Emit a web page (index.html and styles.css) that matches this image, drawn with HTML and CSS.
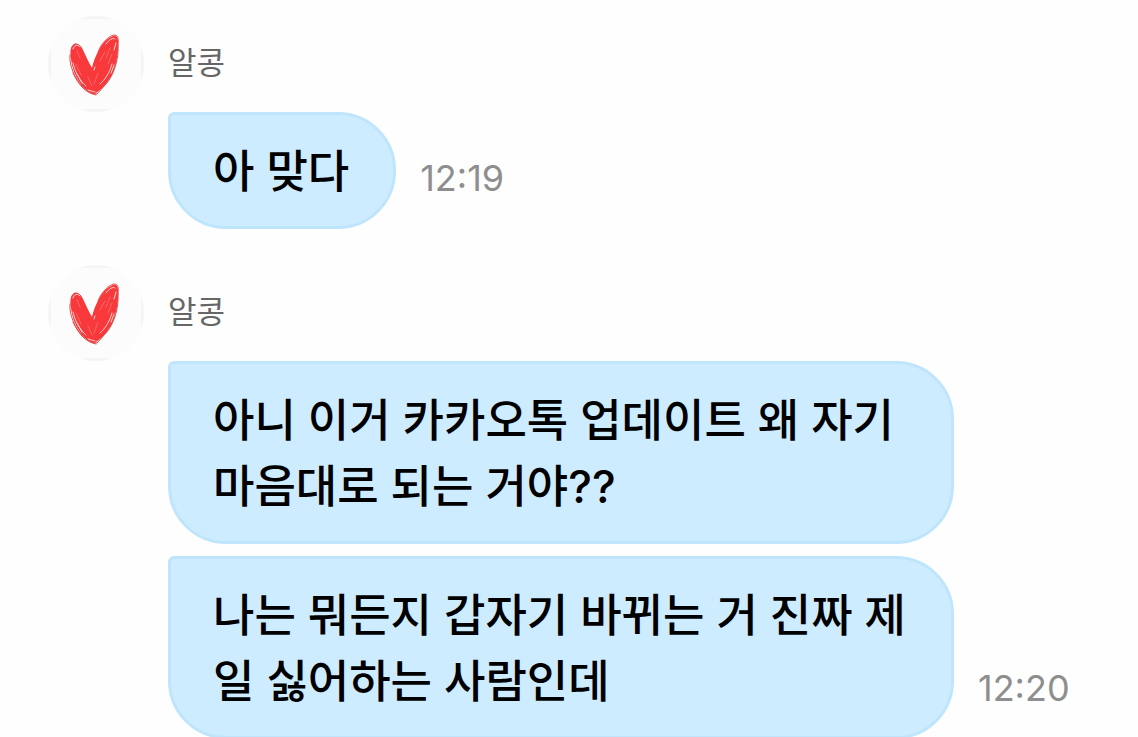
FILE: index.html
```html
<!DOCTYPE html>
<html lang="ko">
<head>
    <meta charset="UTF-8">
    <meta name="viewport" content="width=device-width, initial-scale=1.0">
    <title>알콩</title>
    <link rel="stylesheet" href="styles.css">
</head>
<body>

<svg class="symbols" aria-hidden="true">
    <symbol id="heart" viewBox="0 0 96 96">
        <path fill="#f8383a" d="M25 29 C22 31 22 38 23 43 C24 52 27 60 32 67 C36 73 41 77 46 78 C53 75 60 66 64 58 C68 49 71 37 70 25 C70 21 68 19 65 20 C59 22 54 28 51 34 C47 41 45 47 44 52 C41 47 38 40 35 34 C32 28 28 26 25 29 Z"/>
        <path fill="none" stroke="#e04a4a" stroke-width="1" stroke-linecap="round" d="M24 33 C24 27 31 26 34 33 M22 39 C21 50 27 62 33 69 L41 76 M50 36 C54 25 65 16 69 20 C72 24 69 32 68 39 M70 29 C71 43 66 59 58 68 L49 78 L43 77 M25 57 C31 70 38 77 48 79 M67 45 C67 55 61 65 53 73"/>
        <path fill="none" stroke="#ffd0cd" stroke-width="1" stroke-linecap="round" d="M25 33 C26 29 30 28 32 31 M25 47 C27 56 32 65 38 70 M29 58 L34 67 M58 28 C61 24 65 21 67 23 M68 27 L66 34 M64 48 C62 56 57 64 52 68 M66 49 L63 57 M40 74 L47 76 M47 51 L46 54"/>
        <path fill="none" stroke="#fb6a67" stroke-width="1" stroke-linecap="round" d="M29 35 L32 42 M28 48 L33 59 M57 36 L52 45 M62 32 L58 42 M50 57 L46 68 M40 61 L44 70 M64 38 L60 48"/>
    </symbol>
</svg>

<main class="chat">
    <section class="group">
        <header class="sender">
            <svg class="avatar" role="img" aria-label="알콩"><use href="#heart"/></svg>
            <span class="name">알콩</span>
        </header>
        <div class="messages">
            <div class="row">
                <p class="bubble">아 맞다</p>
                <time class="time">12:19</time>
            </div>
        </div>
    </section>

    <section class="group">
        <header class="sender">
            <svg class="avatar" role="img" aria-label="알콩"><use href="#heart"/></svg>
            <span class="name">알콩</span>
        </header>
        <div class="messages">
            <div class="row">
                <p class="bubble">아니 이거 카카오톡 업데이트 왜 자기 마음대로 되는 거야??</p>
            </div>
            <div class="row">
                <p class="bubble">나는 뭐든지 갑자기 바뀌는 거 진짜 제일 싫어하는 사람인데</p>
                <time class="time">12:20</time>
            </div>
        </div>
    </section>
</main>

</body>
</html>
```
FILE: styles.css
```css
* {
    box-sizing: border-box;
}

body {
    margin: 0;
    background-color: #fefefe;
    color: #000;
    font-family: Inter, "Noto Sans CJK KR", sans-serif;
}

.symbols {
    display: none;
}

.chat {
    display: flex;
    flex-direction: column;
    gap: 36px;
    padding: 16px 48px 0;
}

.sender {
    display: flex;
    align-items: center;
    gap: 24px;
}

/* faint square frame, cut down to four short arcs by the round crop */
.avatar {
    width: 96px;
    height: 96px;
    border-radius: 50%;
    background:
        linear-gradient(#f5f5f5, #f5f5f5) top / 100% 3px no-repeat,
        linear-gradient(#f5f5f5, #f5f5f5) bottom / 100% 3px no-repeat,
        linear-gradient(#f5f5f5, #f5f5f5) left / 3px 100% no-repeat,
        linear-gradient(#f5f5f5, #f5f5f5) right / 3px 100% no-repeat,
        #fcfcfc;
}

.name {
    padding-bottom: 2px;
    font-size: 31px;
    line-height: 40px;
    color: #666;
}

.messages {
    display: flex;
    flex-direction: column;
    gap: 12px;
    padding-left: 120px;
}

.row {
    display: flex;
    align-items: flex-end;
    gap: 24px;
}

.bubble {
    max-width: 786px;
    margin: 0;
    padding: 24px 44px 21px 42px;
    border: 3px solid #bfe5fd;
    border-radius: 6px 58px 58px 58px;
    background-color: #ceecff;
    font-size: 45px;
    font-weight: 500;
    line-height: 66px;
}

.time {
    flex-shrink: 0;
    padding-bottom: 29px;
    font-size: 36px;
    line-height: 44px;
    color: #8e8e8e;
}
```
